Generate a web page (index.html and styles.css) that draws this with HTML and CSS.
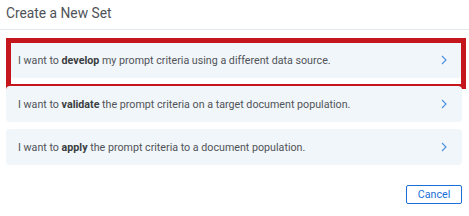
FILE: index.html
```html
<!DOCTYPE html>
<html>
<head>
<meta charset="utf-8">
<link rel="stylesheet" href="styles.css">
</head>
<body>
<div class="dialog">
  <div class="header">Create a New Set</div>
  <div class="options">
    <div class="option first">
      <span class="label">I want to <b>develop</b> my prompt criteria using a different data source.</span>
      <svg class="chev" width="6" height="10" viewBox="0 0 6 10"><path d="M1 1 L5 5 L1 9" fill="none" stroke="#4a90e2" stroke-width="1.1"/></svg>
      <div class="highlight"></div>
    </div>
    <div class="option">
      <span class="label">I want to <b>validate</b> the prompt criteria on a target document population.</span>
      <svg class="chev" width="6" height="10" viewBox="0 0 6 10"><path d="M1 1 L5 5 L1 9" fill="none" stroke="#4a90e2" stroke-width="1.1"/></svg>
    </div>
    <div class="option">
      <span class="label">I want to <b>apply</b> the prompt criteria to a document population.</span>
      <svg class="chev" width="6" height="10" viewBox="0 0 6 10"><path d="M1 1 L5 5 L1 9" fill="none" stroke="#4a90e2" stroke-width="1.1"/></svg>
    </div>
  </div>
  <div class="footer">
    <button class="cancel">Cancel</button>
  </div>
</div>
</body>
</html>
```
FILE: styles.css
```css
html, body {
  margin: 0;
  padding: 0;
  background: #ffffff;
  font-family: Roboto, "Liberation Sans", sans-serif;
}
.dialog {
  width: 469px;
}
.header {
  height: 30px;
  box-sizing: border-box;
  padding: 3px 6px 0;
  font-size: 13.8px;
  line-height: 20px;
  color: #4f5358;
  border-bottom: 1px solid #e3e8ee;
}
.options {
  display: flex;
  flex-direction: column;
  gap: 7px;
  padding: 12px 7px 0 6px;
}
.option {
  position: relative;
  height: 36px;
  display: flex;
  align-items: center;
  justify-content: space-between;
  padding: 0 15px 0 12px;
  background: #f1f6fa;
  border-radius: 4px;
  font-size: 10.7px;
  color: #505358;
}
.option.first {
  margin-bottom: 1px;
}
.option b {
  font-weight: 700;
  color: #3a3d41;
}
.chev {
  display: block;
}
.highlight {
  position: absolute;
  left: 0;
  top: -4px;
  right: -4px;
  bottom: -11px;
  border: 5px solid #c4161c;
  pointer-events: none;
}
.footer {
  display: flex;
  justify-content: flex-end;
  padding: 20px 7px 0 0;
}
.cancel {
  width: 56px;
  height: 19px;
  box-sizing: border-box;
  border: 1px solid #1a6ed8;
  border-radius: 2px;
  background: #ffffff;
  color: #1a6ed8;
  font-family: Roboto, "Liberation Sans", sans-serif;
  font-size: 10.7px;
  padding: 0;
}
```
